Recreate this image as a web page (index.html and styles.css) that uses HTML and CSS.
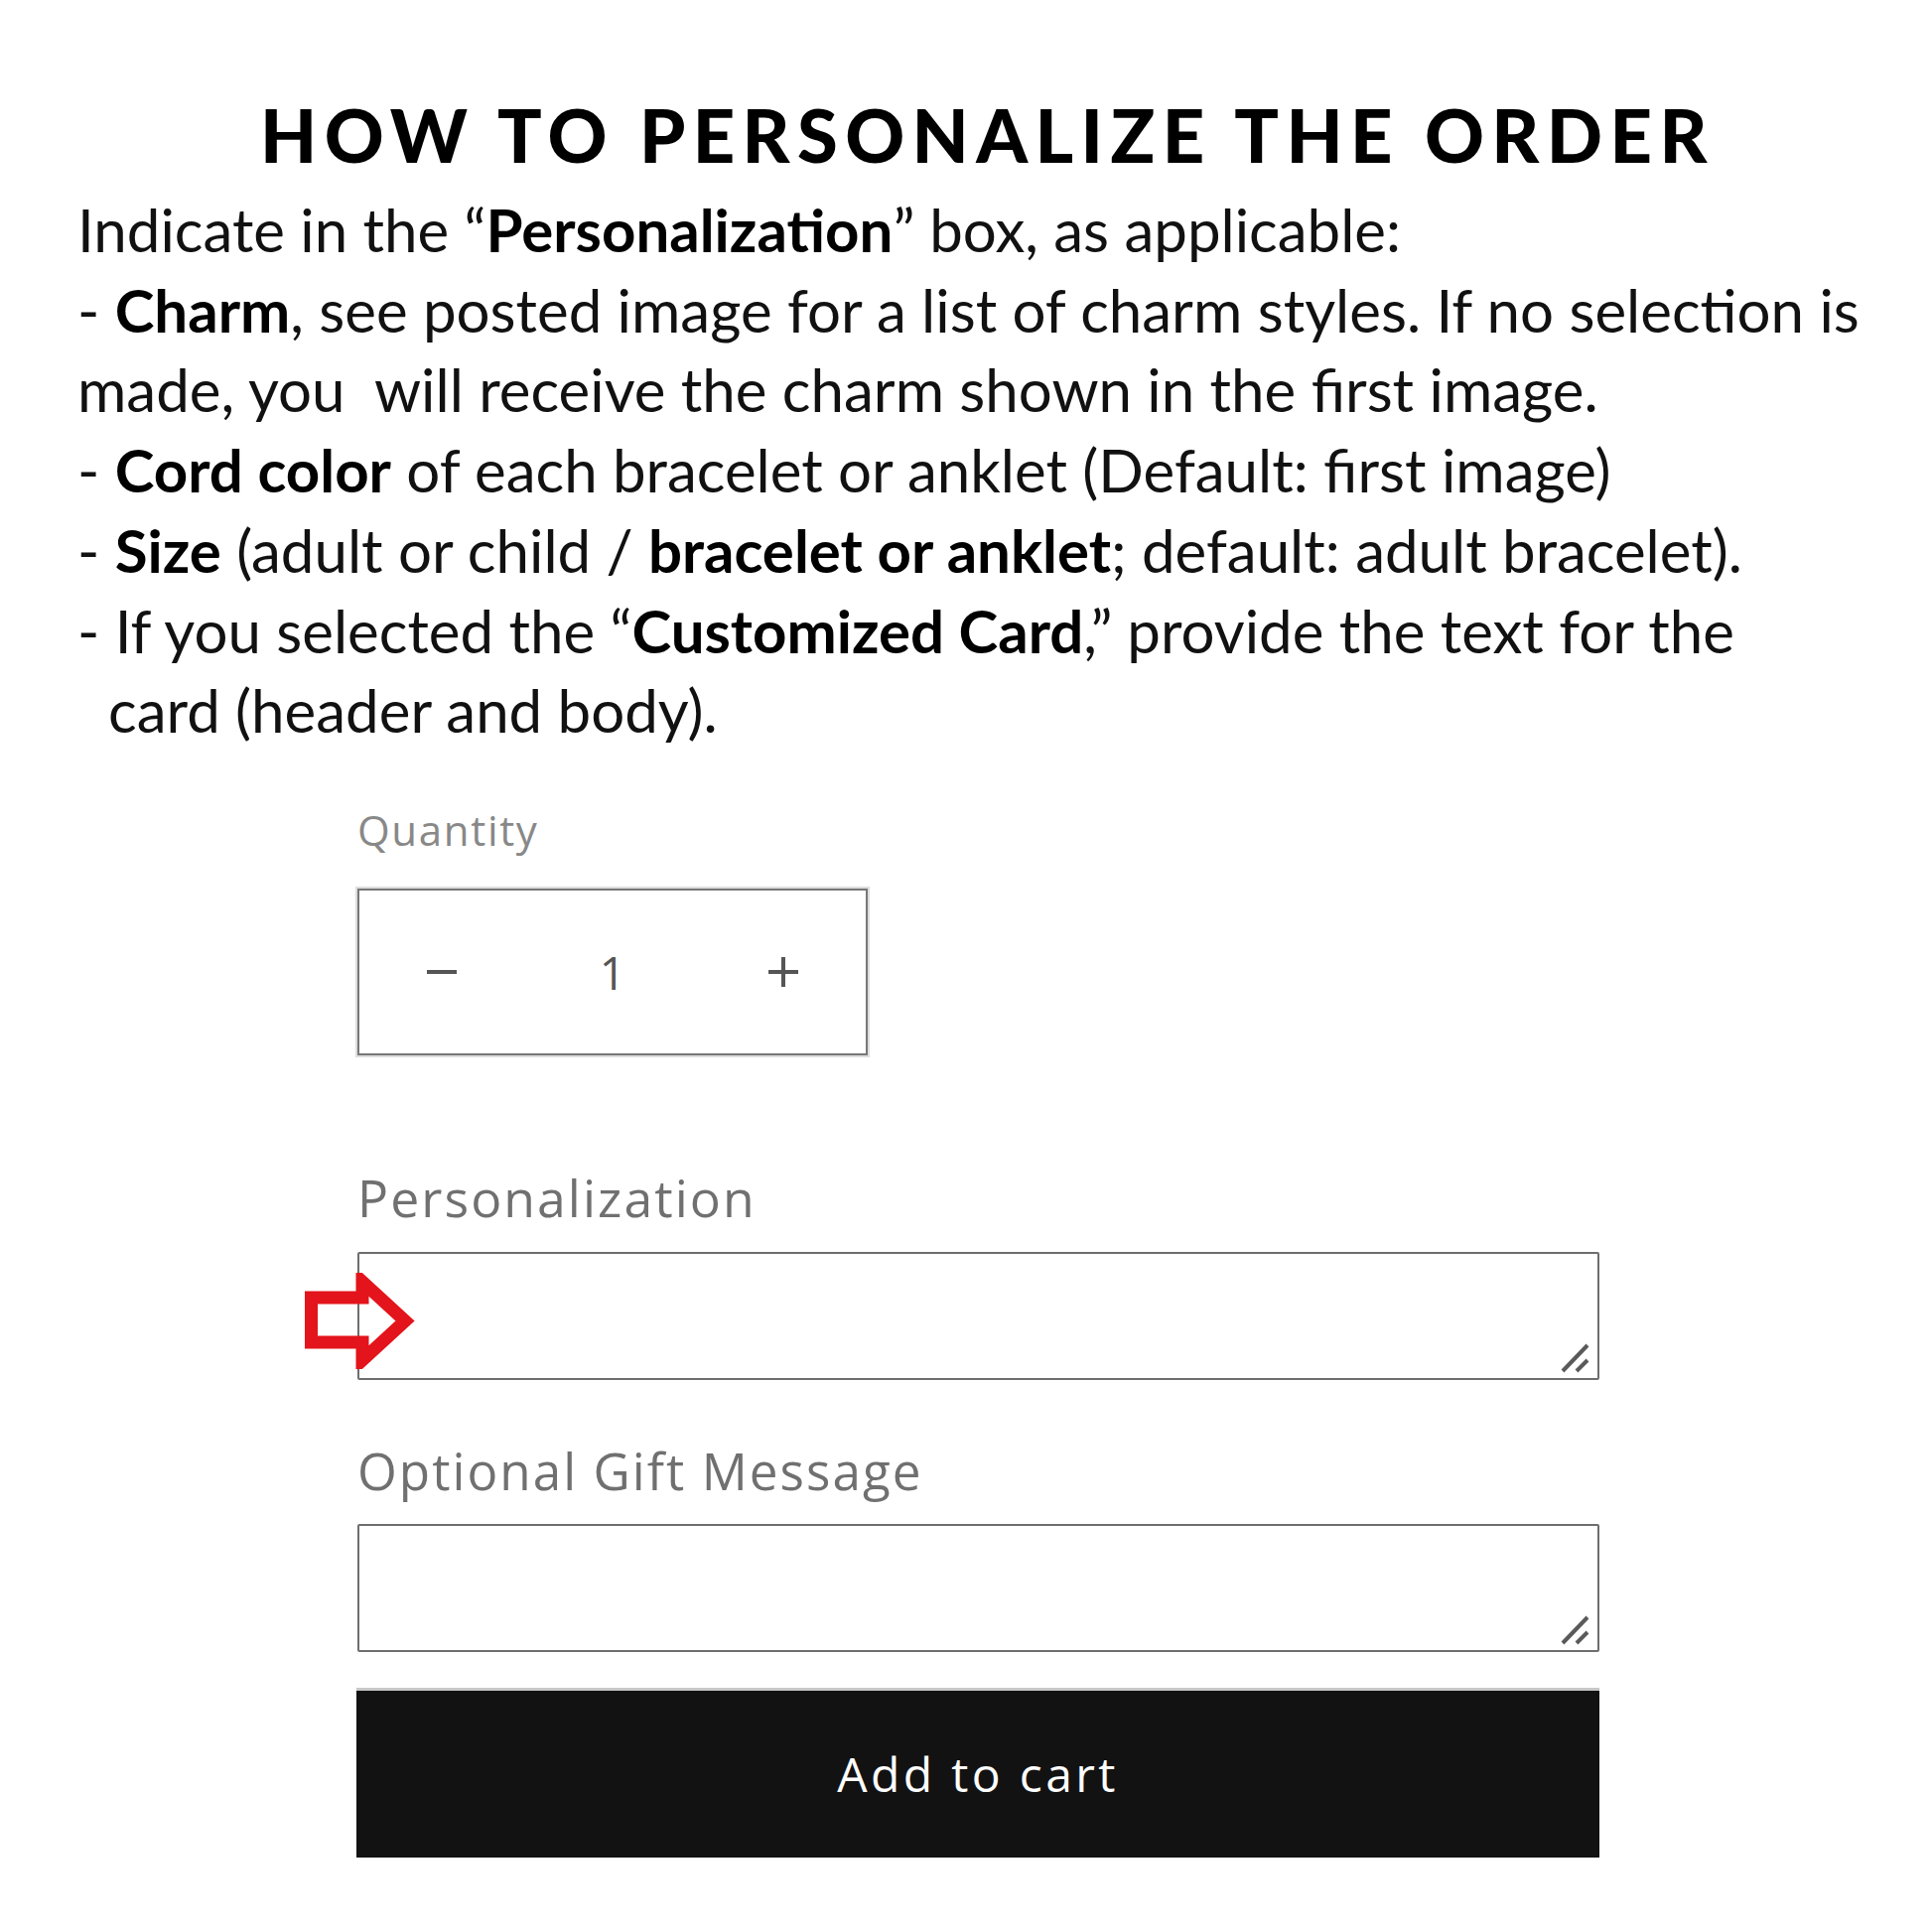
FILE: index.html
```html
<!DOCTYPE html>
<html lang="en">

<head>
    <meta charset="UTF-8">
    <meta name="viewport" content="width=device-width, initial-scale=1.0">
    <title>How to personalize the order</title>
    <link rel="stylesheet" href="styles.css">
</head>

<body>
    <main class="page">
        <h1 class="title">HOW TO PERSONALIZE THE ORDER</h1>

        <div class="instructions">
            <p class="line">Indicate in the “<b>Personalization</b>” box, as applicable:</p>
            <p class="line">- <b>Charm</b>, see posted image for a list of charm styles. If no selection is</p>
            <p class="line">made, you&nbsp; will receive the charm shown in the first image.</p>
            <p class="line">- <b>Cord color</b> of each bracelet or anklet (Default: first image)</p>
            <p class="line">- <b>Size</b> (adult or child / <b>bracelet or anklet</b>; default: adult bracelet).</p>
            <p class="line">- If you selected the “<b>Customized Card</b>,” provide the text for the</p>
            <p class="line indent">card (header and body).</p>
        </div>

        <form class="product-form">
            <label class="field-label qty-label">Quantity</label>
            <div class="qty">
                <button type="button" class="qty-btn">
                    <svg width="30" height="30" viewBox="0 0 30 30"><path d="M0 15h30" stroke="#555" stroke-width="4"/></svg>
                </button>
                <span class="qty-value">1</span>
                <button type="button" class="qty-btn">
                    <svg width="30" height="30" viewBox="0 0 30 30"><path d="M0 15h30M15 0v30" stroke="#555" stroke-width="4"/></svg>
                </button>
            </div>

            <label class="field-label personal-label">Personalization</label>
            <div class="field">
                <textarea class="textarea"></textarea>
                <svg class="grip" width="30" height="30" viewBox="0 0 30 30">
                    <path d="M2 28L27 2M16 28L27 17" stroke="#5a5a5a" stroke-width="4"/>
                </svg>
                <!-- red pointer over the left edge of the box -->
                <svg class="pointer" width="112" height="97" viewBox="0 0 112 97">
                    <path d="M6.5 25H58V9L101 48.5L58 88V70H6.5Z" fill="none" stroke="#e3141b" stroke-width="13"/>
                </svg>
            </div>

            <label class="field-label gift-label">Optional Gift Message</label>
            <div class="field">
                <textarea class="textarea"></textarea>
                <svg class="grip" width="30" height="30" viewBox="0 0 30 30">
                    <path d="M2 28L27 2M16 28L27 17" stroke="#5a5a5a" stroke-width="4"/>
                </svg>
            </div>

            <button type="button" class="cart-btn">Add to cart</button>
        </form>
    </main>
</body>

</html>
```

FILE: styles.css
```css
body {
    margin: 0;
    background: #fff;
    color: #111;
}

.page {
    width: 1946px;
    min-height: 1946px;
    box-sizing: border-box;
    padding-top: 91px;
}

.title {
    margin: 0 0 0 262px;
    font-family: "Lato", sans-serif;
    font-weight: 900;
    font-size: 74px;
    line-height: 90px;
    letter-spacing: 7.4px;
    white-space: nowrap;
    color: #000;
}

.instructions {
    margin-top: 10px;
    padding-left: 78px;
    font-family: "Lato", sans-serif;
    font-size: 60px;
    line-height: 80.7px;
    color: #111;
}

.line {
    margin: 0;
    white-space: nowrap;
}

.line b {
    font-weight: 700;
    color: #000;
}

.indent {
    padding-left: 31px;
}

.product-form {
    display: flex;
    flex-direction: column;
    align-items: flex-start;
    width: 1251px;
    margin: 0 0 0 360px;
    font-family: "Open Sans", sans-serif;
}

.field-label {
    color: #707070;
    letter-spacing: 0.04em;
    line-height: 1;
}

.qty-label {
    margin-top: 59px;
    font-size: 42px;
    color: #888;
}

.qty {
    display: flex;
    align-items: center;
    justify-content: space-between;
    box-sizing: border-box;
    width: 514px;
    height: 168px;
    margin-top: 38px;
    padding: 0 68px 0 68px;
    border: 2px solid #777;
    box-shadow: 0 0 0 2px #ddd;
}

.qty-btn {
    display: flex;
    padding: 0;
    border: none;
    background: none;
}

.qty-value {
    font-size: 46px;
    color: #555;
}

.personal-label {
    margin-top: 118px;
    font-size: 51.7px;
}

.field {
    position: relative;
    width: 100%;
    margin-top: 28px;
}

.textarea {
    display: block;
    box-sizing: border-box;
    width: 100%;
    height: 129px;
    border: 2px solid #6e6e6e;
    border-radius: 2px;
    background: #fff;
    resize: none;
}

.grip {
    position: absolute;
    right: 9px;
    bottom: 7px;
}

.pointer {
    position: absolute;
    left: -53px;
    top: 21px;
}

.gift-label {
    margin-top: 66px;
    font-size: 51.2px;
}

.cart-btn {
    width: 1252px;
    height: 171px;
    margin: 36px 0 0 -1px;
    border: none;
    border-top: 3px solid #c8c8c8;
    background: #121212;
    color: #fff;
    font-family: "Open Sans", sans-serif;
    font-size: 48px;
    letter-spacing: 0.07em;
}
```
